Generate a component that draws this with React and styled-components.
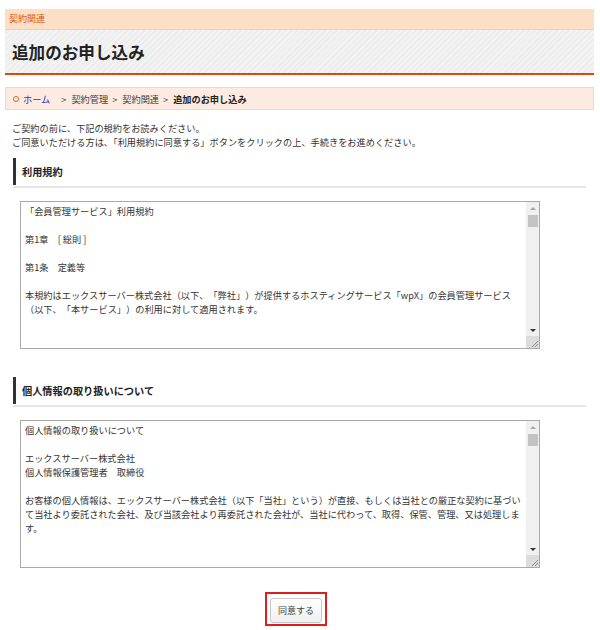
import styled, { createGlobalStyle } from "styled-components";

const GlobalStyle = createGlobalStyle`
  body {
    margin: 0;
    background: #fff;
    font-family: "Noto Sans CJK JP", "Noto Sans", sans-serif;
    color: #333;
  }
`;

const Page = styled.div`
  width: 589px;
  padding: 9px 0 0 5px;
`;

const CategoryBar = styled.div`
  height: 20px;
  line-height: 20px;
  padding-left: 4px;
  background: #fddfc5;
  border-bottom: 1px solid #f4cdb0;
  color: #e0580f;
  font-size: 9px;
`;

const TitleBand = styled.div`
  height: 43px;
  display: flex;
  align-items: center;
  padding-left: 7px;
  background: repeating-linear-gradient(135deg, #f3f3f3 0 2px, #ededed 2px 4px);
  border-bottom: 2px solid #e0470f;
  h1 {
    margin: 0;
    font-size: 16.6px;
    font-weight: bold;
    color: #222;
  }
`;

const Breadcrumb = styled.div`
  margin-top: 12px;
  height: 21px;
  display: flex;
  align-items: center;
  padding-left: 7px;
  background: #fdeae0;
  border: 1px solid #f8d5c3;
  font-size: 9.2px;
  color: #333;
`;

const Ring = styled.span`
  width: 4px;
  height: 4px;
  border: 1.5px solid #e0661f;
  border-radius: 50%;
  margin-right: 4px;
`;

const HomeLink = styled.a`
  color: #2f2fc8;
  text-decoration: none;
  margin-right: 11px;
`;

const Crumb = styled.span`
  font-weight: ${(p) => (p.$current ? "bold" : "normal")};
  color: ${(p) => (p.$current ? "#222" : "#444")};
  &::before {
    content: ">";
    margin-right: 5px;
    font-weight: normal;
    color: #555;
  }
  & + & {
    margin-left: 4px;
  }
`;

const Content = styled.div`
  padding: 0 8px;
`;

const Intro = styled.p`
  margin: 11px 0 0 -1px;
  font-size: 9.2px;
  line-height: 14px;
  color: #333;
`;

const SectionHead = styled.div`
  margin-top: ${(p) => p.$top}px;
  padding-bottom: 1px;
  border-bottom: 2px solid #e6e6e6;
`;

const SectionLabel = styled.h2`
  margin: 0;
  height: 27px;
  line-height: 27px;
  border-left: 3px solid #333;
  padding-left: 6px;
  font-size: 10.2px;
  font-weight: bold;
  color: #222;
`;

const Frame = styled.div`
  display: flex;
  width: 520px;
  height: 148px;
  box-sizing: border-box;
  margin: 13px 0 0 7px;
  border: 1px solid #a9a9a9;
  background: #fff;
`;

const TextBox = styled.textarea`
  flex: 1;
  min-width: 0;
  margin: 0;
  padding: 2px 2px 2px 4px;
  border: none;
  resize: none;
  overflow: hidden;
  outline: none;
  font-family: "Noto Sans CJK JP", "Noto Sans", sans-serif;
  font-size: 9.2px;
  line-height: 14px;
  text-spacing-trim: space-all;
  color: #333;
  background: #fff;
`;

const Rail = styled.div`
  width: 13px;
  display: flex;
  flex-direction: column;
  background: #f0f0f0;
`;

const ArrowCell = styled.div`
  height: 12px;
  display: flex;
  align-items: center;
  justify-content: center;
  &::after {
    content: "";
    border-left: 3px solid transparent;
    border-right: 3px solid transparent;
    ${(p) =>
      p.$down
        ? "border-top: 3px solid #333;"
        : "border-bottom: 3px solid #a8a8a8;"}
  }
`;

const Thumb = styled.div`
  width: 10px;
  height: 12px;
  margin: 1px auto 0;
  background: #c3c3c3;
`;

const RailSpace = styled.div`
  flex: 1;
`;

const Corner = styled.div`
  height: 12px;
  background: #dcdcdc;
  display: flex;
  align-items: flex-end;
  justify-content: flex-end;
`;

const ButtonRow = styled.div`
  display: flex;
  justify-content: center;
  padding: 24px 7px 0 0;
`;

const Highlight = styled.div`
  border: 2px solid #e11c1c;
  padding: 1px 3px;
`;

const AgreeButton = styled.button`
  width: 52px;
  height: 25px;
  border: 1px solid #c9c9c9;
  border-radius: 3px;
  background: linear-gradient(#ffffff, #f0f0f0);
  font-family: "Noto Sans CJK JP", sans-serif;
  font-size: 9px;
  color: #444;
  padding: 0;
  cursor: pointer;
`;

const termsText = `「会員管理サービス」利用規約

第1章　[ 総則 ]

第1条　定義等

本規約はエックスサーバー株式会社（以下、「弊社」）が提供するホスティングサービス「wpX」の会員管理サービス
（以下、「本サービス」）の利用に対して適用されます。



第2条　規約の変更

弊社は、会員の承諾を得ることなく本規約を変更できるものとします。
変更後の規約は、弊社ウェブサイト上に掲示した時点より効力を生じるものとします。

第3条　通知

弊社から会員への通知は、電子メールの送信または弊社ウェブサイト上への掲示により行います。`;

const privacyText = `個人情報の取り扱いについて

エックスサーバー株式会社
個人情報保護管理者　取締役

お客様の個人情報は、エックスサーバー株式会社（以下「当社」という）が直接、もしくは当社との厳正な契約に基づい
て当社より委託された会社、及び当該会社より再委託された会社が、当社に代わって、取得、保管、管理、又は処理しま
す。



1. 個人情報の利用目的

当社は、お客様の個人情報を以下の目的のために利用いたします。
・サービスの提供、契約の締結及び履行のため
・料金の請求及び収納のため
・お問い合わせへの回答のため`;

function ScrollText({ text }) {
  return (
    <Frame>
      <TextBox readOnly defaultValue={text} />
      <Rail>
        <ArrowCell />
        <Thumb />
        <RailSpace />
        <ArrowCell $down />
        <Corner>
          <svg width="9" height="9" viewBox="0 0 9 9">
            <path d="M8 2 L2 8 M8 5 L5 8" stroke="#8a8a8a" strokeWidth="1" />
          </svg>
        </Corner>
      </Rail>
    </Frame>
  );
}

export default function App() {
  return (
    <>
      <GlobalStyle />
      <Page>
        <CategoryBar>契約関連</CategoryBar>
        <TitleBand>
          <h1>追加のお申し込み</h1>
        </TitleBand>
        <Breadcrumb>
          <Ring />
          <HomeLink href="#">ホーム</HomeLink>
          <Crumb>契約管理</Crumb>
          <Crumb>契約関連</Crumb>
          <Crumb $current>追加のお申し込み</Crumb>
        </Breadcrumb>
        <Content>
          <Intro>
            ご契約の前に、下記の規約をお読みください。
            <br />
            ご同意いただける方は、「利用規約に同意する」ボタンをクリックの上、手続きをお進めください。
          </Intro>
          <SectionHead $top={9}>
            <SectionLabel>利用規約</SectionLabel>
          </SectionHead>
          <ScrollText text={termsText} />
          <SectionHead $top={28}>
            <SectionLabel>個人情報の取り扱いについて</SectionLabel>
          </SectionHead>
          <ScrollText text={privacyText} />
          <ButtonRow>
            <Highlight>
              <AgreeButton type="button">同意する</AgreeButton>
            </Highlight>
          </ButtonRow>
        </Content>
      </Page>
    </>
  );
}
